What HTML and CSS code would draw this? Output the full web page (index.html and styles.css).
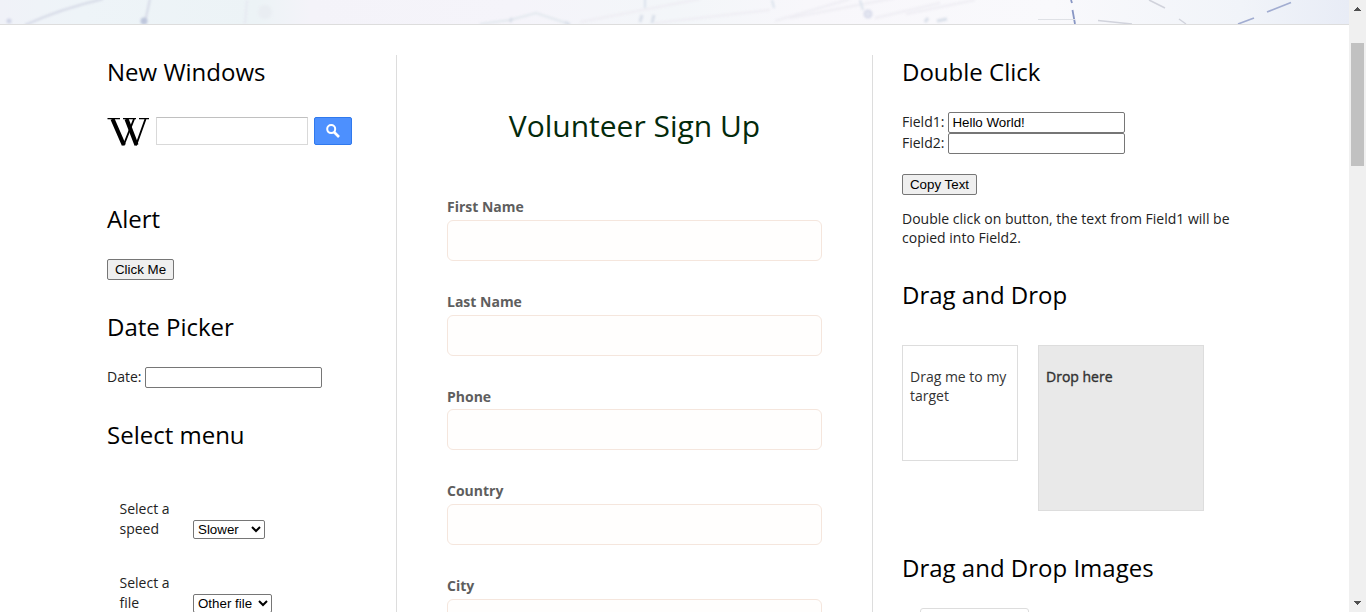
FILE: index.html
```html
<!DOCTYPE html>
<html lang="en">
<head>
<meta charset="utf-8">
<title>Automation Testing Practice</title>
<link rel="stylesheet" href="styles.css">
</head>
<body>
<div class="viewport">
  <div class="page">
    <header class="banner">
      <svg width="1349" height="24" viewBox="0 0 1349 24">
        <defs>
          <linearGradient id="sky">
            <stop offset="0" stop-color="#f0f2f8"/><stop offset=".06" stop-color="#eef4f8"/>
            <stop offset=".19" stop-color="#ecf3f6"/><stop offset=".23" stop-color="#f4f3f9"/>
            <stop offset=".38" stop-color="#f5f4fa"/><stop offset=".5" stop-color="#f3f6f9"/>
            <stop offset=".6" stop-color="#f8f7fb"/><stop offset=".78" stop-color="#f9f9fc"/>
            <stop offset=".92" stop-color="#f1f4f9"/><stop offset="1" stop-color="#e8ecf6"/>
          </linearGradient>
          <filter id="soft" x="-10%" y="-50%" width="120%" height="200%" color-interpolation-filters="sRGB"><feGaussianBlur stdDeviation="1.3"/></filter>
          <filter id="fine" x="-10%" y="-50%" width="120%" height="200%" color-interpolation-filters="sRGB"><feGaussianBlur stdDeviation=".35"/></filter>
        </defs>
        <rect width="1349" height="24" fill="url(#sky)"/>
        <g filter="url(#soft)" fill="none" stroke="#dcdfe9" stroke-width="2">
          <path d="M25 25Q60 9 103-1M150-1L145 22" stroke="#d5d9e6"/>
          <path d="M247 0L245 24" stroke="#e6e9f1"/>
          <path d="M480 24L510 20L536 13L566 23" stroke="#e2e8ee"/>
          <path d="M580 22L700-1M655 23L770 10M775 21L850-1M790 18L895-2M875 18L940 3M906 14L975 0" stroke="#eeedf3"/>
          <path d="M645-2L645 8M772 0L774 8M860 0L863 10" stroke="#dbe3ec"/>
          <circle cx="144" cy="21" r="3.5" fill="#bec6dc" stroke="none"/>
          <circle cx="9" cy="21" r="2.5" fill="#d0d5e6" stroke="none"/>
          <circle cx="868" cy="14" r="3.5" stroke="#d9dceb" fill="#e2e5f0"/>
          <circle cx="265" cy="12" r="7" fill="#e9edf2" stroke="none"/>
          <path d="M640 22L642 15M652 23L654 15M510 22L512 18M565 22L570 25M925 22L928 18M937 21L947 19" stroke="#d9dfe9" stroke-width="3"/>
        </g>
        <g filter="url(#fine)" fill="none">
          <path d="M1071 0L1072 3M1072.5 10L1075 24" stroke="#8997c4" stroke-width="1.8"/>
          <path d="M1238 24L1254 18M1267 12L1291 2.5M1304-1L1310-3" stroke="#a2add1" stroke-width="1.8"/>
          <path d="M1149 0L1165 8M1179 19L1186 24M1098 20.5L1132 24" stroke="#d1d3dc" stroke-width="1.5"/>
          <path d="M1038 19.5L1075 19.5" stroke="#dfe1e6"/>
        </g>
      </svg>
    </header>
    <main class="columns">
      <div class="column left">
        <section class="widget search-widget">
          <h2>New Windows</h2>
          <form class="wiki">
            <svg class="wiki-logo" width="43" height="30" viewBox="0 0 43 30" fill="none" stroke="#000">
              <path d="M.5 1.6H13M16 1.6H29M32 1.6H42" stroke-width="1.4"/>
              <path d="M5.5 2L16.8 28M19.5 2L29.5 28" stroke-width="4.2"/>
              <path d="M16.5 28.5L27 2M29 28.5L38.5 2" stroke-width="1.9"/>
            </svg>
            <input class="wiki-input" type="text">
            <button class="wiki-button" type="button">
              <svg width="14" height="14" viewBox="0 0 14 14" fill="none" stroke="#fff"><circle cx="5.2" cy="5.1" r="4" stroke-width="2"/><path d="M8 8L13 13" stroke-width="2.7"/></svg>
            </button>
          </form>
        </section>
        <section class="widget"><h2>Alert</h2><button class="btn alert-btn" type="button">Click Me</button></section>
        <section class="widget"><h2>Date Picker</h2><div class="line"><label>Date:</label><input class="field" type="text"></div></section>
        <section class="widget">
          <h2>Select menu</h2>
          <div class="choices">
            <div class="choice"><label>Select a speed</label><select class="speed"><option>Slower</option></select></div>
            <div class="choice"><label>Select a file</label><select class="file"><option>Other file</option></select></div>
          </div>
        </section>
      </div>
      <div class="column center">
        <h1>Volunteer Sign Up</h1>
        <div class="entry"><label>First Name</label><input type="text"></div>
        <div class="entry"><label>Last Name</label><input type="text"></div>
        <div class="entry"><label>Phone</label><input type="text"></div>
        <div class="entry"><label>Country</label><input type="text"></div>
        <div class="entry"><label>City</label><input type="text"></div>
      </div>
      <div class="column right">
        <section class="double-click">
          <h2>Double Click</h2>
          <div class="line"><label>Field1:</label><input class="field" type="text" value="Hello World!"></div>
          <div class="line"><label>Field2:</label><input class="field" type="text"></div>
          <button class="btn copy-btn" type="button">Copy Text</button>
          <p>Double click on button, the text from Field1 will be copied into Field2.</p>
        </section>
        <section class="drag-drop">
          <h2>Drag and Drop</h2>
          <div class="boxes"><div class="drag">Drag me to my target</div><div class="drop">Drop here</div></div>
        </section>
        <section><h2>Drag and Drop Images</h2><div class="image-card"></div></section>
      </div>
    </main>
  </div>
  <div class="scrollbar">
    <svg width="17" height="17" viewBox="0 0 17 17"><path d="M5 11h7v-1h-1V9h-1V8H9V7H8v1H7v1H6v1H5z" fill="#505050"/></svg>
    <div class="thumb"></div>
    <svg class="down" width="17" height="17" viewBox="0 0 17 17"><path d="M5 6h7v1h-1v1h-1v1H9v1H8V9H7V8H6V7H5z" fill="#505050"/></svg>
  </div>
</div>
</body>
</html>
```
FILE: styles.css
```css
* { box-sizing: border-box; }
body { margin: 0; overflow: hidden; background: #fff; color: #222; font: 14px/19px "Open Sans", sans-serif; }
.viewport { display: flex; height: 612px; overflow: hidden; }
.page { width: 1349px; height: 612px; overflow: hidden; }
.banner { height: 25px; border-bottom: 1px solid #ddd; }
.banner svg { display: block; }
.columns { display: grid; grid-template-columns: 290px 476px 430px; padding: 30px 0 0 107px; }
.column { height: 700px; }
.left, .center { border-right: 1px solid #ddd; }
.right { padding-left: 29px; }
h2 { margin: 0 0 23px; font-size: 24px; font-weight: 400; line-height: 34px; color: #000; }
.widget { height: 108px; }
.search-widget { height: 147px; }
.wiki { display: flex; align-items: flex-start; padding-top: 5px; }
.wiki-logo { margin-right: 6px; }
.wiki-input { width: 152px; height: 28px; margin-right: 6px; border: 1px solid #d9d9d9; border-top-color: #c0c0c0; }
.wiki-button { display: flex; align-items: center; justify-content: center; width: 38px; height: 28px; padding: 0; border: 1px solid #3079ed; border-radius: 2px; background: #4d90fe; }
.btn { display: block; height: 21px; padding: 0; border: 1px solid #767676; border-radius: 2px; background: #efefef; color: #000; font: 13.333px/19px "Liberation Sans", sans-serif; }
.alert-btn { width: 67px; }
.copy-btn { width: 75px; margin-top: 20px; }
.line { display: flex; gap: 4px; height: 21px; }
.field { width: 177px; height: 21px; padding: 1px 3px; border: 1px solid #767676; border-radius: 2px; color: #000; font: 13.333px "Liberation Sans", sans-serif; }
.choices { padding: 24px 0 0 12px; line-height: 20px; }
.choice { display: flex; align-items: flex-end; height: 40px; margin-bottom: 34px; }
.choice label { width: 74px; height: 40px; padding: 0 13px 0 .5px; }
.choice select { height: 19px; padding: 0; border: 1px solid #767676; border-radius: 2px; background: #fff; color: #000; font: 13.333px "Liberation Sans", sans-serif; }
.speed { width: 72px; }
.file { width: 79px; }
.center { padding: 50px 50px 0; }
h1 { margin: 0 0 51.2px; color: #032a0b; font-size: 30px; font-weight: 400; line-height: 41px; text-align: center; }
.entry { height: 94.7px; color: #5e5e5e; font-weight: 700; }
.entry label { display: block; height: 22.8px; line-height: 20px; }
.entry input { display: block; width: 375px; height: 41px; border: 1px solid #f5e6dd; border-radius: 6px; background: #fffefd; }
.double-click { height: 223px; }
.double-click p { width: 340px; margin: 14px 0 0; }
.drag-drop { height: 273px; }
.boxes { display: flex; gap: 20px; align-items: flex-start; padding-top: 10px; color: #333; }
.drag, .drop { padding: 21px 7px; border: 1px solid #ddd; }
.drag { width: 116px; height: 116px; }
.drop { width: 166px; height: 166px; background: #e9e9e9; -webkit-text-stroke: .4px #333; }
.image-card { width: 109px; height: 100px; margin-left: 18px; border: 1px solid #ddd; border-radius: 3px; }
.scrollbar { display: flex; flex-direction: column; width: 17px; height: 612px; background: #f0f0f0; }
.scrollbar svg { display: block; }
.thumb { width: 13px; height: 123px; margin: 26px 2px 0; background: #c1c1c1; }
.down { margin-top: auto; }
```
